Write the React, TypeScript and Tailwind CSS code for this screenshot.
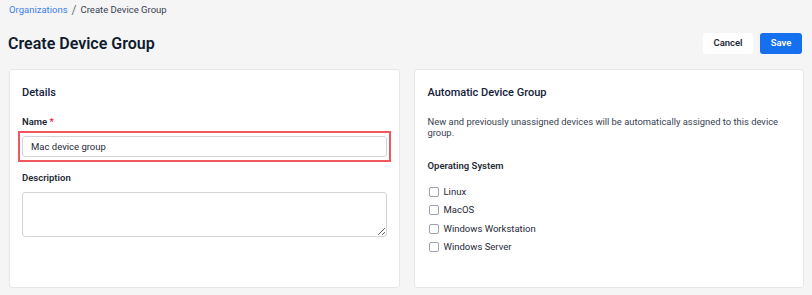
const osOptions = ["Linux", "MacOS", "Windows Workstation", "Windows Server"];

export default function App() {
  return (
    <div className="w-[812px] h-[295px] bg-[#f5f5f5] pl-[9px] pr-[8px] pt-[3px] font-['Roboto',sans-serif] text-[#1f2a37] overflow-hidden">
      <div className="h-[14px] leading-[14px] text-[9.5px] flex items-center">
        <span className="text-[#3d7ff0]">Organizations</span>
        <span className="mx-[4px] text-[#6b7280] text-[12px]">/</span>
        <span className="text-[#374151]">Create Device Group</span>
      </div>

      <div className="mt-[16px] flex items-center justify-between h-[21px]">
        <h1 className="text-[16px] leading-[21px] font-semibold text-[#0f1b2d] -ml-[1px]">Create Device Group</h1>
        <div className="flex gap-[7px] mr-[2px]">
          <button className="w-[50px] h-[21px] rounded-[3px] bg-white text-[9.5px] font-semibold text-[#1f2937]">Cancel</button>
          <button className="w-[42px] h-[21px] rounded-[3px] bg-[#1570ef] text-[9.5px] font-semibold text-white">Save</button>
        </div>
      </div>

      <div className="mt-[15px] grid grid-cols-2 gap-[14px]">
        <div className="h-[219px] bg-white border border-[#e6e6e6] rounded-[3px] px-[12px] pt-[15px] flex flex-col">
          <h2 className="text-[11px] leading-[16px] font-medium text-[#14213a]">Details</h2>
          <label className="mt-[14px] text-[9.5px] leading-[14px] font-semibold">
            Name <span className="text-[#e11d48]">*</span>
          </label>
          <div className="mt-[2px] -mx-[4px] border-2 border-[#f0585e] px-[2px] py-[3px]">
            <input
              defaultValue="Mac device group"
              className="block w-full h-[21px] border border-[#d4d4d8] rounded-[3px] px-[8px] text-[9.5px] text-[#1f2937] outline-none"
            />
          </div>
          <label className="mt-[9px] text-[9.5px] leading-[14px] font-semibold">Description</label>
          <textarea className="block mt-[7px] h-[45px] w-full border border-[#d4d4d8] rounded-[3px] resize-y outline-none" />
        </div>

        <div className="h-[219px] bg-white border border-[#e6e6e6] rounded-[3px] px-[13px] pt-[15px] flex flex-col">
          <h2 className="text-[11px] leading-[16px] font-medium text-[#14213a]">Automatic Device Group</h2>
          <p className="mt-[15px] text-[9.4px] leading-[11px] text-[#374151] pr-[10px]">
            New and previously unassigned devices will be automatically assigned to this device group.
          </p>
          <h3 className="mt-[22px] text-[9.5px] leading-[12px] font-semibold">Operating System</h3>
          <div className="mt-[11px] flex flex-col">
            {osOptions.map((os) => (
              <label key={os} className="h-[18.3px] flex items-center gap-[5px] text-[9.5px] text-[#1f2937]">
                <span className="w-[10px] h-[10px] border border-[#9ca3af] rounded-[2px] bg-white ml-[1px]" />
                {os}
              </label>
            ))}
          </div>
        </div>
      </div>
    </div>
  );
}
